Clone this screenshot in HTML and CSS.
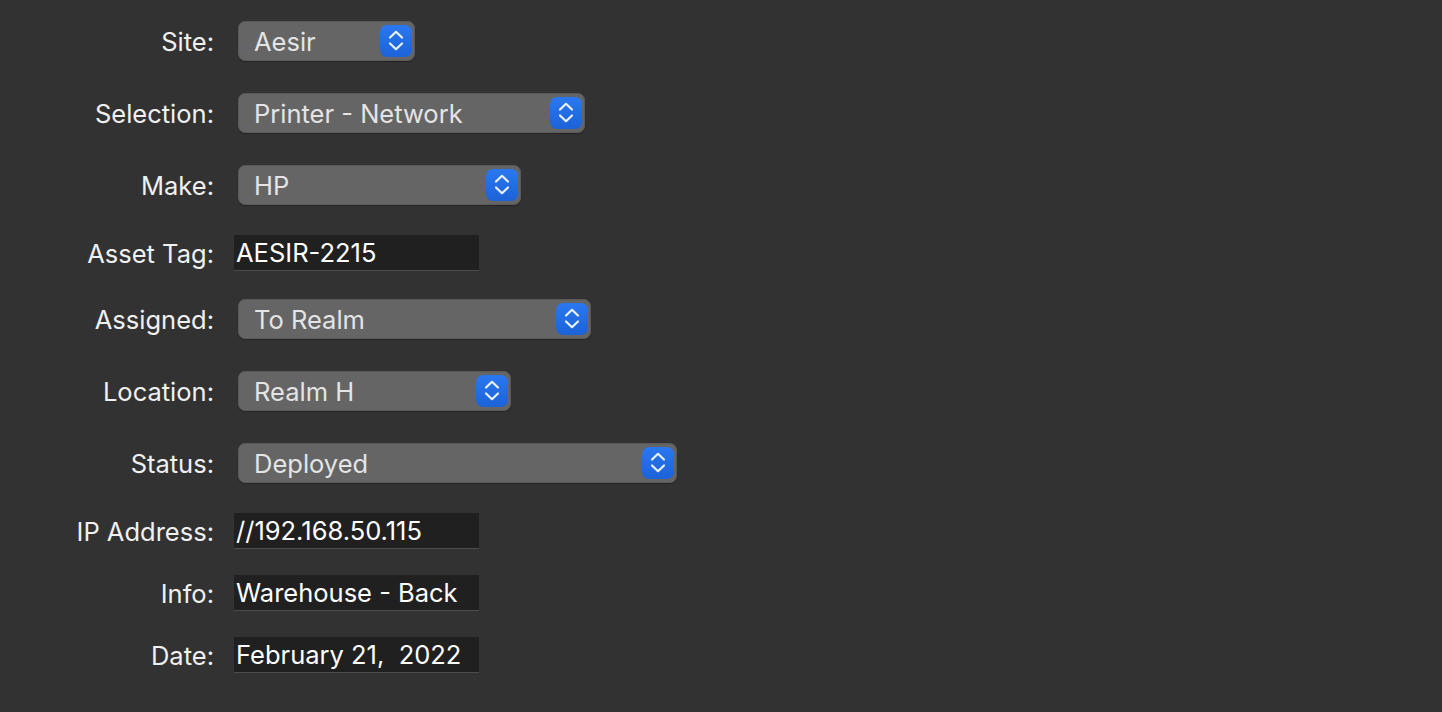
FILE: index.html
```html
<!DOCTYPE html>
<html>
<head>
<meta charset="utf-8">
<link rel="stylesheet" href="styles.css">
</head>
<body>
<div class="form">
  <div class="row popup-row">
    <div class="label">Site:</div>
    <div class="popup w-site"><span class="value">Aesir</span><span class="stepper"><svg viewBox="0 0 32 32" width="32" height="32"><path d="M10 12.5 L16 6.8 L22 12.5"/><path d="M10 18.5 L16 24.2 L22 18.5"/></svg></span></div>
  </div>
  <div class="row popup-row">
    <div class="label">Selection:</div>
    <div class="popup w-selection"><span class="value">Printer - Network</span><span class="stepper"><svg viewBox="0 0 32 32" width="32" height="32"><path d="M10 12.5 L16 6.8 L22 12.5"/><path d="M10 18.5 L16 24.2 L22 18.5"/></svg></span></div>
  </div>
  <div class="row popup-row">
    <div class="label">Make:</div>
    <div class="popup w-make"><span class="value">HP</span><span class="stepper"><svg viewBox="0 0 32 32" width="32" height="32"><path d="M10 12.5 L16 6.8 L22 12.5"/><path d="M10 18.5 L16 24.2 L22 18.5"/></svg></span></div>
  </div>
  <div class="row field-row">
    <div class="label">Asset Tag:</div>
    <div class="field">AESIR-2215</div>
  </div>
  <div class="row popup-row">
    <div class="label">Assigned:</div>
    <div class="popup w-assigned"><span class="value">To Realm</span><span class="stepper"><svg viewBox="0 0 32 32" width="32" height="32"><path d="M10 12.5 L16 6.8 L22 12.5"/><path d="M10 18.5 L16 24.2 L22 18.5"/></svg></span></div>
  </div>
  <div class="row popup-row">
    <div class="label">Location:</div>
    <div class="popup w-location"><span class="value">Realm H</span><span class="stepper"><svg viewBox="0 0 32 32" width="32" height="32"><path d="M10 12.5 L16 6.8 L22 12.5"/><path d="M10 18.5 L16 24.2 L22 18.5"/></svg></span></div>
  </div>
  <div class="row popup-row">
    <div class="label">Status:</div>
    <div class="popup w-status"><span class="value">Deployed</span><span class="stepper"><svg viewBox="0 0 32 32" width="32" height="32"><path d="M10 12.5 L16 6.8 L22 12.5"/><path d="M10 18.5 L16 24.2 L22 18.5"/></svg></span></div>
  </div>
  <div class="row field-row">
    <div class="label">IP Address:</div>
    <div class="field">//192.168.50.115</div>
  </div>
  <div class="row field-row">
    <div class="label">Info:</div>
    <div class="field">Warehouse - Back</div>
  </div>
  <div class="row field-row">
    <div class="label">Date:</div>
    <div class="field">February 21,&nbsp; 2022</div>
  </div>
</div>
</body>
</html>
```

FILE: styles.css
```css
html, body {
  margin: 0;
  padding: 0;
  background: #323232;
  height: 100%;
}
body {
  font-family: Inter, "Noto Sans", "Liberation Sans", sans-serif;
  font-size: 25.5px;
  color: #f2f2f2;
}
.form {
  display: flex;
  flex-direction: column;
  padding-top: 21px;
}
.row {
  display: flex;
  align-items: center;
}
.popup-row { height: 40px; }
.field-row { height: 36px; }
.popup-row + .popup-row { margin-top: 32px; }
.popup-row + .field-row { margin-top: 30px; }
.field-row + .popup-row { margin-top: 28px; }
.field-row + .field-row { margin-top: 26px; }

.label {
  width: 214px;
  text-align: right;
  flex: none;
  color: #f0f0f0;
  white-space: nowrap;
}
.popup {
  margin-left: 24px;
  height: 40px;
  box-sizing: border-box;
  background: #656565;
  border: 1px solid #595959;
  border-radius: 7px;
  box-shadow: 0 1px 1px rgba(0,0,0,0.25);
  display: flex;
  align-items: center;
  justify-content: space-between;
  padding: 0 2px 0 15px;
}
.popup .value {
  color: #e4e4e4;
  white-space: nowrap;
}
.stepper {
  flex: none;
  width: 32px;
  height: 32px;
  border-radius: 7px;
  background: linear-gradient(#2a78f0, #1c62d8);
  display: flex;
  align-items: center;
  justify-content: center;
}
.stepper svg {
  display: block;
}
.stepper path {
  fill: none;
  stroke: #eaf1ff;
  stroke-width: 2.2;
  stroke-linecap: round;
  stroke-linejoin: round;
}
.w-site { width: 177px; }
.w-selection { width: 347px; }
.w-make { width: 283px; }
.w-assigned { width: 353px; }
.w-location { width: 273px; }
.w-status { width: 439px; }

.field {
  margin-left: 20px;
  width: 245px;
  height: 36px;
  box-sizing: border-box;
  background: #202020;
  border-bottom: 1px solid #4c4c4c;
  color: #ffffff;
  padding: 0 2px;
  display: flex;
  align-items: center;
  white-space: nowrap;
}
```
